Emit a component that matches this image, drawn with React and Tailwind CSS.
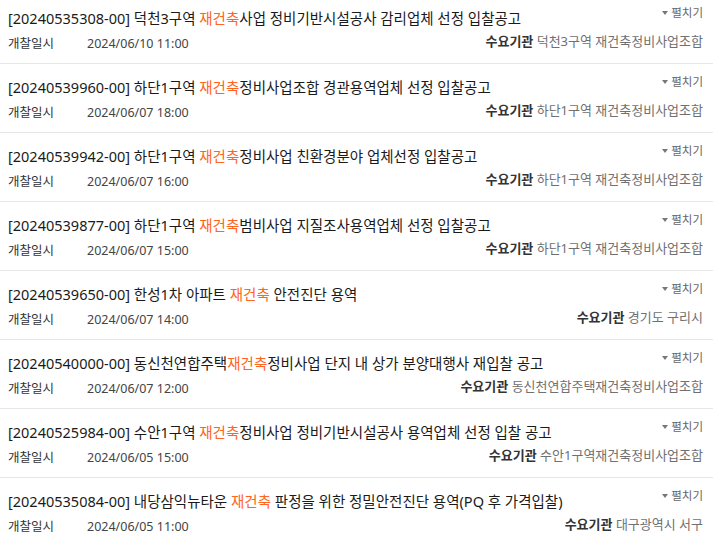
import React from 'react';

const items = [
  { no: '20240535308-00', pre: '덕천3구역 ', post: '사업 정비기반시설공사 감리업체 선정 입찰공고', date: '2024/06/10 11:00', org: '덕천3구역 재건축정비사업조합' },
  { no: '20240539960-00', pre: '하단1구역 ', post: '정비사업조합 경관용역업체 선정 입찰공고', date: '2024/06/07 18:00', org: '하단1구역 재건축정비사업조합' },
  { no: '20240539942-00', pre: '하단1구역 ', post: '정비사업 친환경분야 업체선정 입찰공고', date: '2024/06/07 16:00', org: '하단1구역 재건축정비사업조합' },
  { no: '20240539877-00', pre: '하단1구역 ', post: '범비사업 지질조사용역업체 선정 입찰공고', date: '2024/06/07 15:00', org: '하단1구역 재건축정비사업조합' },
  { no: '20240539650-00', pre: '한성1차 아파트 ', post: ' 안전진단 용역', date: '2024/06/07 14:00', org: '경기도 구리시' },
  { no: '20240540000-00', pre: '동신천연합주택', post: '정비사업 단지 내 상가 분양대행사 재입찰 공고', date: '2024/06/07 12:00', org: '동신천연합주택재건축정비사업조합' },
  { no: '20240525984-00', pre: '수안1구역 ', post: '정비사업 정비기반시설공사 용역업체 선정 입찰 공고', date: '2024/06/05 15:00', org: '수안1구역재건축정비사업조합' },
  { no: '20240535084-00', pre: '내당삼익뉴타운 ', post: ' 판정을 위한 정밀안전진단 용역(PQ 후 가격입찰)', date: '2024/06/05 11:00', org: '대구광역시 서구' },
];

function Row({ item }) {
  return (
    <div className="flex justify-between h-[69px] border-b border-[#e6e6e6] pl-[8px] pr-[10px]">
      <div className="min-w-0 pt-[13px]">
        <div className="text-[14.5px] leading-[20px] text-[#1a1a1a] whitespace-pre">
          [{item.no}] {item.pre}
          <span className="text-[#ff6420]">재건축</span>
          {item.post}
        </div>
        <div className="flex items-center mt-[6px] leading-[20px]">
          <span className="w-[79px] text-[12.5px] text-[#333]">개찰일시</span>
          <span className="text-[12.5px] text-[#444]">{item.date}</span>
        </div>
      </div>
      <div className="shrink-0 flex flex-col items-end pt-[10px]">
        <div className="flex items-center gap-[3px] text-[11.5px] leading-[16px] text-[#666]">
          <span className="inline-block w-0 h-0 border-l-[3.5px] border-r-[3.5px] border-t-[4px] border-l-transparent border-r-transparent border-t-[#777]" />
          <span>펼치기</span>
        </div>
        <div className="mt-[10px] text-[13px] leading-[20px] whitespace-pre">
          <span className="font-bold text-[#333]">수요기관</span>
          <span className="text-[#707070]"> {item.org}</span>
        </div>
      </div>
    </div>
  );
}

export default function App() {
  return (
    <div
      className="w-[713px] h-[538px] overflow-hidden bg-white"
      style={{ fontFamily: '"Noto Sans", "Noto Sans CJK KR", sans-serif' }}
    >
      <div className="-mt-[5px]">
        {items.map((item) => (
          <Row key={item.no} item={item} />
        ))}
      </div>
    </div>
  );
}
